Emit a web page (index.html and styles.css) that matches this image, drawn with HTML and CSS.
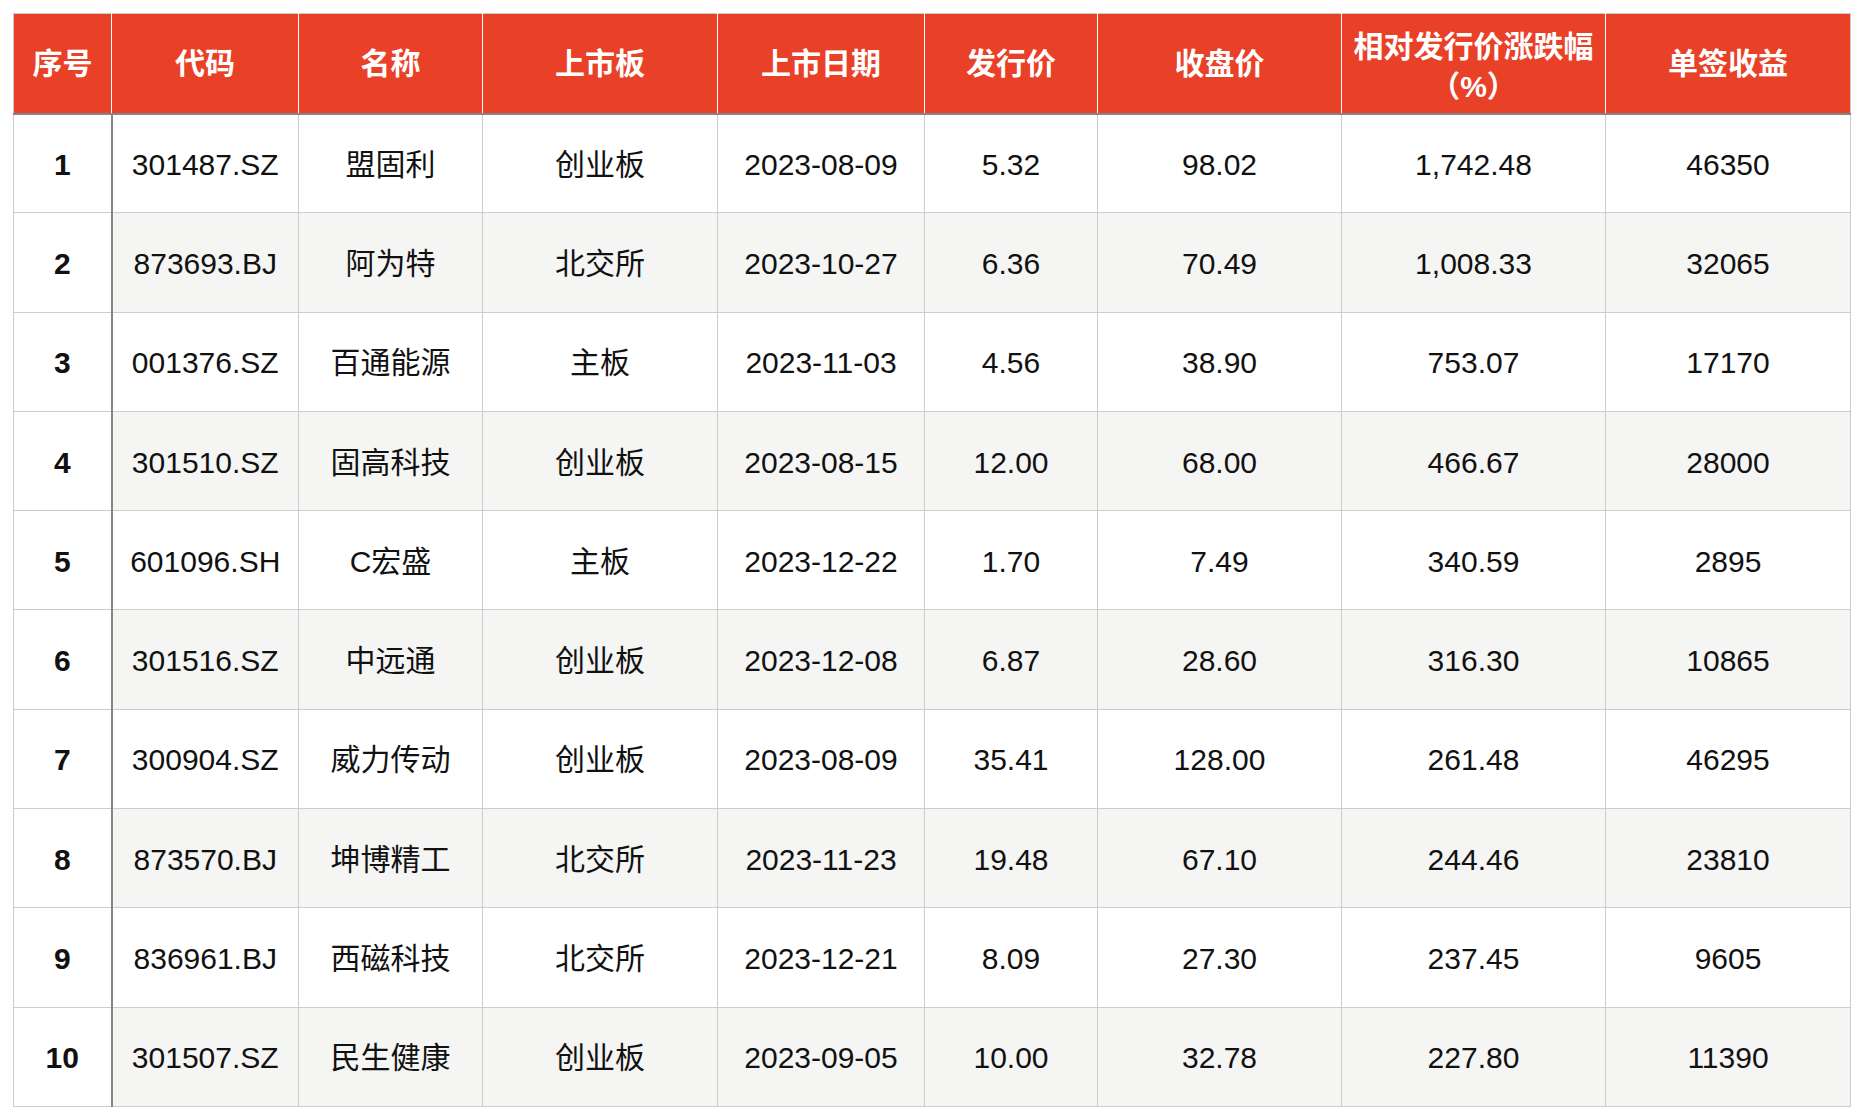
FILE: index.html
```html
<!DOCTYPE html>
<html lang="zh-CN">
<head>
<meta charset="utf-8">
<title>2023 新股单签收益</title>
<link rel="stylesheet" href="styles.css">
</head>
<body>
<table class="ipo-table">
  <colgroup>
    <col class="c-no"><col class="c-code"><col class="c-name"><col class="c-board"><col class="c-date"><col class="c-issue"><col class="c-close"><col class="c-chg"><col class="c-gain">
  </colgroup>
  <thead>
    <tr>
      <th>序号</th><th>代码</th><th>名称</th><th>上市板</th><th>上市日期</th><th>发行价</th><th>收盘价</th><th class="two-line">相对发行价涨跌幅<br>（%）</th><th>单签收益</th>
    </tr>
  </thead>
  <tbody>
    <tr><td class="idx">1</td><td>301487.SZ</td><td>盟固利</td><td>创业板</td><td>2023-08-09</td><td>5.32</td><td>98.02</td><td>1,742.48</td><td>46350</td></tr>
    <tr><td class="idx">2</td><td>873693.BJ</td><td>阿为特</td><td>北交所</td><td>2023-10-27</td><td>6.36</td><td>70.49</td><td>1,008.33</td><td>32065</td></tr>
    <tr><td class="idx">3</td><td>001376.SZ</td><td>百通能源</td><td>主板</td><td>2023-11-03</td><td>4.56</td><td>38.90</td><td>753.07</td><td>17170</td></tr>
    <tr><td class="idx">4</td><td>301510.SZ</td><td>固高科技</td><td>创业板</td><td>2023-08-15</td><td>12.00</td><td>68.00</td><td>466.67</td><td>28000</td></tr>
    <tr><td class="idx">5</td><td>601096.SH</td><td>C宏盛</td><td>主板</td><td>2023-12-22</td><td>1.70</td><td>7.49</td><td>340.59</td><td>2895</td></tr>
    <tr><td class="idx">6</td><td>301516.SZ</td><td>中远通</td><td>创业板</td><td>2023-12-08</td><td>6.87</td><td>28.60</td><td>316.30</td><td>10865</td></tr>
    <tr><td class="idx">7</td><td>300904.SZ</td><td>威力传动</td><td>创业板</td><td>2023-08-09</td><td>35.41</td><td>128.00</td><td>261.48</td><td>46295</td></tr>
    <tr><td class="idx">8</td><td>873570.BJ</td><td>坤博精工</td><td>北交所</td><td>2023-11-23</td><td>19.48</td><td>67.10</td><td>244.46</td><td>23810</td></tr>
    <tr><td class="idx">9</td><td>836961.BJ</td><td>西磁科技</td><td>北交所</td><td>2023-12-21</td><td>8.09</td><td>27.30</td><td>237.45</td><td>9605</td></tr>
    <tr><td class="idx">10</td><td>301507.SZ</td><td>民生健康</td><td>创业板</td><td>2023-09-05</td><td>10.00</td><td>32.78</td><td>227.80</td><td>11390</td></tr>
  </tbody>
</table>
</body>
</html>
```

FILE: styles.css
```css
html, body {
  margin: 0;
  padding: 0;
  background: #ffffff;
}

body {
  padding: 13px 0 0 13px;
  font-family: "Liberation Sans", "Noto Sans CJK SC", sans-serif;
  color: #111111;
}

.ipo-table {
  border-collapse: collapse;
  table-layout: fixed;
  width: 1837px;
  border: 1px solid #cccccc;
}

.c-no { width: 98px; }
.c-code { width: 187px; }
.c-name { width: 184px; }
.c-board { width: 235px; }
.c-date { width: 207px; }
.c-issue { width: 173px; }
.c-close { width: 244px; }
.c-chg { width: 264px; }
.c-gain { width: 245px; }

.ipo-table thead tr {
  height: 100px;
}

.ipo-table th {
  background: #e94128;
  color: #ffffff;
  font-weight: 700;
  font-size: 30px;
  line-height: 41px;
  padding: 0;
  text-align: center;
  vertical-align: middle;
  border-left: 1px solid #ffffff;
  border-right: 1px solid #ffffff;
  border-top: 1px solid #cccccc;
  border-bottom: 2px solid #868686;
}

.ipo-table th.two-line {
  padding-top: 7px;
  line-height: 40px;
}

.ipo-table th:first-child {
  border-left: 1px solid #cccccc;
}

.ipo-table th:last-child {
  border-right: 1px solid #cccccc;
}

.ipo-table tbody tr {
  height: 99.3px;
}

.ipo-table td {
  font-size: 30px;
  line-height: 36px;
  padding: 3px 0 0 0;
  text-align: center;
  vertical-align: middle;
  border: 1px solid #cccccc;
  background: #ffffff;
}

.ipo-table tbody tr:nth-child(even) td {
  background: #f5f5f4;
}

.ipo-table tbody tr td.idx {
  background: #ffffff;
  font-weight: 700;
  border-right: 2px solid #868686;
}
```
